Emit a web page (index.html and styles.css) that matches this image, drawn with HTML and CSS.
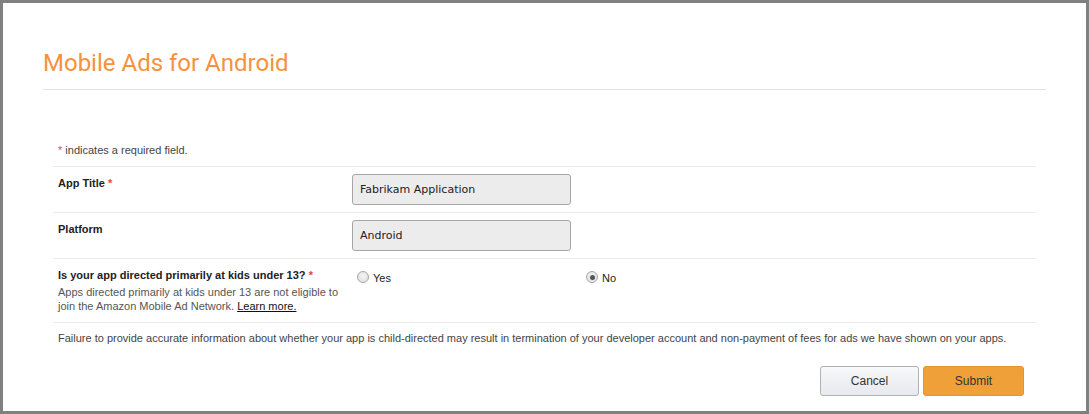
FILE: index.html
```html
<!DOCTYPE html>
<html>
<head>
<meta charset="utf-8">
<link rel="stylesheet" href="styles.css">
</head>
<body>
<div class="frame">
  <div class="header">
    <h1 class="title">Mobile Ads for Android</h1>
  </div>
  <div class="form">
    <div class="note"><span class="req">*</span> indicates a required field.</div>
    <div class="row">
      <div class="label">App Title <span class="req">*</span></div>
      <div class="field"><div class="input">Fabrikam Application</div></div>
    </div>
    <div class="row">
      <div class="label">Platform</div>
      <div class="field"><div class="input">Android</div></div>
    </div>
    <div class="row row-kids">
      <div class="label-block">
        <div class="label">Is your app directed primarily at kids under 13? <span class="req">*</span></div>
        <div class="desc">Apps directed primarily at kids under 13 are not eligible to join the Amazon Mobile Ad Network. <a class="link" href="#">Learn more.</a></div>
      </div>
      <div class="radios">
        <div class="option"><span class="radio"></span><span class="opt-text">Yes</span></div>
        <div class="option"><span class="radio checked"></span><span class="opt-text">No</span></div>
      </div>
    </div>
    <div class="row row-warn">
      <div class="warn">Failure to provide accurate information about whether your app is child-directed may result in termination of your developer account and non-payment of fees for ads we have shown on your apps.</div>
    </div>
    <div class="actions">
      <button class="btn btn-cancel">Cancel</button>
      <button class="btn btn-submit">Submit</button>
    </div>
  </div>
</div>
</body>
</html>
```
FILE: styles.css
```css
html, body {
  margin: 0;
  padding: 0;
  background: #ffffff;
}
.frame {
  width: 1089px;
  height: 414px;
  box-sizing: border-box;
  border: 3px solid #808080;
  padding: 0 40px;
  font-family: "Liberation Sans", Arial, sans-serif;
  font-size: 11px;
  color: #222;
  overflow: hidden;
}
.header {
  padding-top: 44px;
  padding-bottom: 10px;
  border-bottom: 1px solid #e3e3e3;
}
.title {
  margin: 0;
  font-family: Roboto, "Open Sans", sans-serif;
  font-weight: 400;
  font-size: 24px;
  line-height: 32px;
  color: #f5923e;
}
.form {
  margin: 0 10px;
  padding-top: 53px;
}
.note {
  padding-left: 5px;
  line-height: 14px;
  padding-bottom: 9px;
  color: #444;
}
.req {
  color: #e8434d;
}
.row {
  display: grid;
  grid-template-columns: 299px 1fr;
  border-top: 1px solid #ebebeb;
  padding: 7px 0;
}
.label {
  font-weight: bold;
  padding-left: 5px;
  margin-top: 2px;
  line-height: 14px;
  color: #222;
}
.desc {
  padding-left: 5px;
  margin-top: 3px;
  line-height: 14px;
  color: #555;
  width: 290px;
}
.link {
  color: #111;
  text-decoration: underline;
}
.row-kids {
  padding-bottom: 9px;
}
.input {
  width: 219px;
  height: 31px;
  box-sizing: border-box;
  border: 1px solid #a6a6a6;
  border-radius: 3px;
  background: #ececec;
  font-family: "DejaVu Sans", Verdana, sans-serif;
  font-size: 11px;
  line-height: 30px;
  padding-left: 7px;
  color: #222;
}
.radios {
  display: grid;
  grid-template-columns: 229px 229px;
}
.option {
  display: flex;
  align-items: center;
  padding-left: 5px;
  margin-top: 5px;
  height: 12px;
}
.radio {
  width: 12px;
  height: 12px;
  box-sizing: border-box;
  border-radius: 50%;
  border: 1px solid #a8a8a8;
  background: radial-gradient(circle at 50% 40%, #f4f4f4 0%, #dcdcdc 100%);
  display: flex;
  align-items: center;
  justify-content: center;
  flex: none;
}
.radio.checked::after {
  content: "";
  width: 5px;
  height: 5px;
  border-radius: 50%;
  background: #555;
}
.opt-text {
  margin-left: 4px;
  margin-top: 1px;
  color: #222;
}
.row-warn {
  display: block;
  padding-top: 8px;
  padding-bottom: 0;
}
.warn {
  padding-left: 5px;
  line-height: 14px;
  color: #444;
}
.actions {
  display: flex;
  justify-content: flex-end;
  gap: 4px;
  margin-top: 21px;
  padding-right: 12px;
}
.btn {
  height: 30px;
  box-sizing: border-box;
  border-radius: 3px;
  font-family: "Liberation Sans", Arial, sans-serif;
  font-size: 12px;
  color: #333;
  padding: 0;
  cursor: pointer;
}
.btn-cancel {
  width: 99px;
  border: 1px solid #adb1b8;
  background: linear-gradient(#f7f8fa, #e7e9ec);
}
.btn-submit {
  width: 101px;
  border: 1px solid #e3952f;
  background: #f0a038;
}
```
